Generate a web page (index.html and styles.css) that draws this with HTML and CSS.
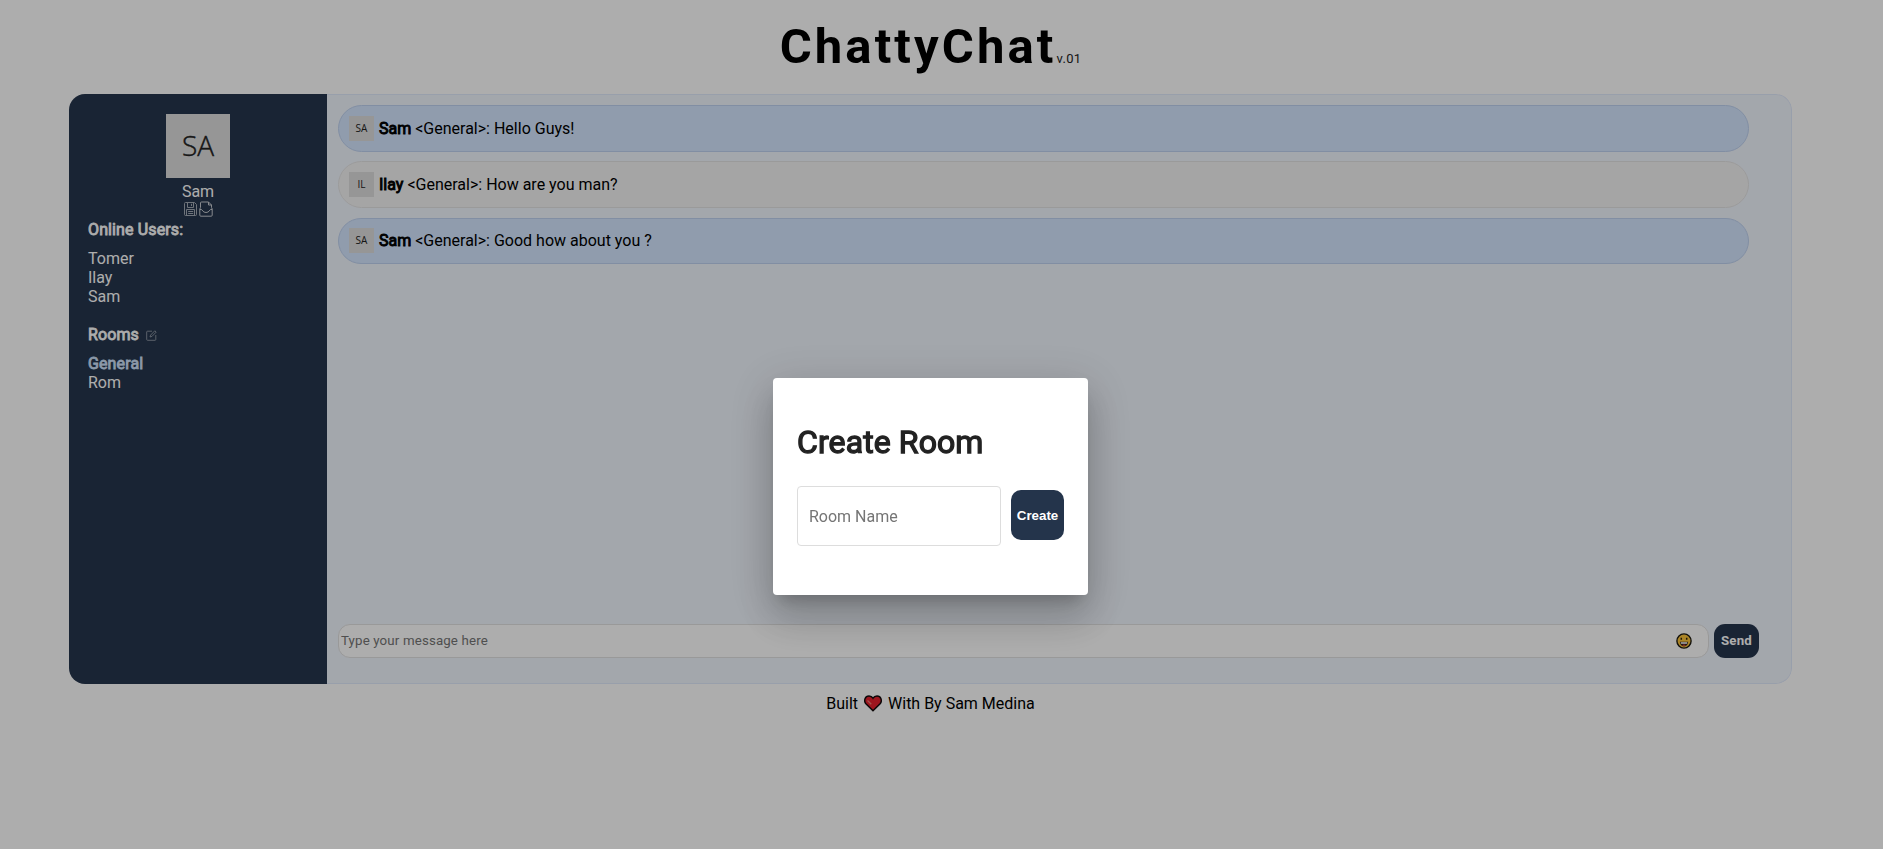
FILE: index.html
```html
<!DOCTYPE html>
<html lang="en">
<head>
<meta charset="utf-8">
<title>ChattyChat</title>
<link rel="stylesheet" href="styles.css">
</head>
<body>
<div class="page">
  <header class="header"><h1 class="title">ChattyChat</h1><span class="version">v.01</span></header>
  <main class="chat">
    <aside class="sidebar">
      <div class="profile">
        <div class="avatar avatar-lg">SA</div>
        <div class="profile-name">Sam</div>
        <div class="profile-icons">
          <svg width="13" height="14" viewBox="0 0 13 14" fill="none" stroke="#a4abb5" stroke-width="1"><path d="M1.500 .5h9l2 2v10a1 1 0 0 1-1 1h-10a1 1 0 0 1-1-1v-11a1 1 0 0 1 1-1zM3.500 1v4.500h6V1M7.500 1.800v2.200M2.500 13V7.500h8V13M4.200 9.500h5M4.200 11.500h5"/></svg>
          <svg width="14" height="16" viewBox="0 0 14 16" fill="none" stroke="#c8ccd2" stroke-width="1"><path d="M1.500 6.500V2a1 1 0 0 1 1-1h7l3 3v2.500M9.500 1v3h3M1.500 6.500L.8 8v6.200a1 1 0 0 0 1 1h10.400a1 1 0 0 0 1-1V8l-.7-1.500M1 8.500h1.500c.6 0 1.300 3 4.500 3s3.900-3 4.500-3H13"/></svg>
        </div>
      </div>
      <h2 class="side-title">Online Users:</h2>
      <ul class="list users"><li>Tomer</li><li>Ilay</li><li>Sam</li></ul>
      <h2 class="side-title">Rooms
        <svg class="edit" width="11" height="11" viewBox="0 0 11 11" fill="none" stroke="#919aa6" stroke-width="0.9"><path d="M6 1.200H1.500a.8.800 0 0 0-.8.800v7.500c0 .5.300.8.800.8H9a.8.800 0 0 0 .8-.8V5M4 7l.6-1.900L8.800.8l1.400 1.300L6 6.400z"/></svg>
      </h2>
      <ul class="list"><li class="current">General</li><li>Rom</li></ul>
    </aside>
    <section class="panel">
      <div class="messages">
        <div class="message mine"><span class="avatar avatar-sm">SA</span><p><b>Sam</b> &lt;General&gt;: Hello Guys!</p></div>
        <div class="message"><span class="avatar avatar-sm">IL</span><p><b>Ilay</b> &lt;General&gt;: How are you man?</p></div>
        <div class="message mine last"><span class="avatar avatar-sm">SA</span><p><b>Sam</b> &lt;General&gt;: Good how about you ?</p></div>
      </div>
      <form class="composer">
        <div class="field">
          <input class="field-input" type="text" placeholder="Type your message here">
          <svg width="16" height="16" viewBox="0 0 16 16"><circle cx="8" cy="8" r="7.100" fill="#fcc53a" stroke="#1c1a12" stroke-width="1.400"/><path d="M5.300 4.700v2M10.700 4.700v2" stroke="#332511" stroke-width="1.500"/><path d="M3.800 8.800h8.400c0 2.700-1.700 4.600-4.200 4.600s-4.200-1.900-4.200-4.600z" fill="#35261c"/><path d="M4.800 9.200h6.400v1.600H4.800z" fill="#fff"/><path d="M6 12.200q2-1.200 4 0-2 1.500-4 0z" fill="#dc4638"/></svg>
        </div>
        <button class="send" type="button">Send</button>
      </form>
    </section>
  </main>
  <footer class="footer">Built
    <svg width="18" height="17" viewBox="0 0 18 17"><path d="M9 15.800L1.900 8.700C-.5 6 1 1 5 1c1.800 0 3.200.9 4 2.200C9.800 1.900 11.200 1 13 1c4 0 5.500 5 3.100 7.700z" fill="#e7202d" stroke="#130b0c" stroke-width="1.500"/><path d="M3.500 5.500l3.800 3.800" stroke="#f47a72" stroke-width="1.300"/></svg>
    With By Sam Medina</footer>
</div>
<div class="backdrop">
  <div class="dialog">
    <h2 class="dialog-title">Create Room</h2>
    <form class="dialog-form">
      <input class="room-input" type="text" placeholder="Room Name">
      <button class="create" type="button">Create</button>
    </form>
  </div>
</div>
</body>
</html>
```
FILE: styles.css
```css
* { box-sizing: border-box; }
body { margin: 0; height: 849px; overflow: hidden; background: #fff; color: #000; font: 16px/19px Roboto, sans-serif; }
h1, h2, p, ul { margin: 0; padding: 0; }
.page { width: 1861px; padding: 0 69px; }
.header { height: 94px; display: flex; justify-content: center; align-items: baseline; padding-top: 19px; }
.title { font-size: 49px; line-height: 56px; font-weight: 700; letter-spacing: 3.100px; }
.version { font-size: 13px; letter-spacing: .3px; color: #222; }
.chat { height: 590px; display: flex; border-radius: 16px; overflow: hidden; }
.sidebar { width: 258px; background: #26364d; color: #fff; padding: 20px 19px; }
.profile { display: flex; flex-direction: column; align-items: center; }
.avatar { display: flex; align-items: center; justify-content: center; background: #ddd; color: #222; font-family: "Open Sans", sans-serif; }
.avatar-lg { width: 64px; height: 64px; font-size: 28px; font-weight: 300; -webkit-text-stroke: .4px; padding-bottom: 1px; }
.avatar-sm { width: 25px; height: 25px; font-size: 10px; }
.profile-name { margin-top: 4px; }
.profile-icons { height: 19px; display: flex; align-items: center; gap: 2px; padding-bottom: 4px; }
.side-title { font-size: 16px; line-height: 19px; font-weight: 400; letter-spacing: .12px; -webkit-text-stroke: .8px; margin-bottom: 10px; }
.list { list-style: none; }
.users { margin-bottom: 19px; }
.current { color: #cfe2fa; letter-spacing: .12px; -webkit-text-stroke: .8px; }
.edit { margin-left: 3px; vertical-align: -1px; }
.panel { flex: 1; background: #f1f6fe; border: 1px solid #e1eafc; border-left: 0; border-radius: 0 16px 16px 0; padding: 10px 32px 25px 11px; display: flex; flex-direction: column; justify-content: space-between; }
.messages { display: flex; flex-direction: column; gap: 9px; width: 1411px; }
.message { height: 47px; border: 1px solid #e4e4e4; border-radius: 24px; background: #f4f4f4; display: flex; align-items: center; padding-left: 10px; gap: 5px; }
.message.last { height: 46px; margin-top: 1px; padding-bottom: 1px; }
.message.mine { background: #d4e6ff; border-color: #bfd2f0; }
.message b { font-weight: 400; -webkit-text-stroke: .9px; }
.composer { display: flex; gap: 5px; height: 34px; }
.field { width: 1371px; display: flex; align-items: center; border: 1px solid #e2e2e2; border-radius: 12px; background: #fff; padding: 0 16px 0 2px; }
.field-input { flex: 1; border: 0; padding: 0 0 1px; background: none; font: 13.300px Roboto, sans-serif; letter-spacing: .14px; }
.field-input::placeholder, .room-input::placeholder { color: #757575; }
.send { width: 45px; border: 0; padding: 0 0 2px; border-radius: 11px; background: #26364d; color: #fff; font: 700 13.300px Roboto, sans-serif; letter-spacing: .2px; }
.footer { display: flex; justify-content: center; align-items: center; gap: 6px; padding-top: 10px; }
.backdrop { position: fixed; inset: 0; background: rgba(0, 0, 0, .32); display: flex; align-items: center; padding: 124px 22px 0 0; justify-content: center; }
.dialog { width: 315px; height: 217px; background: #fff; border-radius: 4px; padding: 45px 24px 24px; box-shadow: 0 11px 15px -7px rgba(0,0,0,.2), 0 24px 38px 3px rgba(0,0,0,.14), 0 9px 46px 8px rgba(0,0,0,.12); }
.dialog-title { color: #222; font-size: 32px; line-height: 38px; font-weight: 400; letter-spacing: .1px; -webkit-text-stroke: 1.300px; }
.dialog-form { display: flex; align-items: center; gap: 10px; margin-top: 25px; }
.room-input { width: 204px; height: 60px; border: 1px solid #ddd; border-radius: 4px; padding: 0 11px; font: 16px Roboto, sans-serif; }
.create { width: 53px; height: 50px; margin-bottom: 2px; border: 0; padding: 0; border-radius: 10px; background: #24344b; color: #fff; font: 700 13.330px "Liberation Sans", Arial, sans-serif; }
```
